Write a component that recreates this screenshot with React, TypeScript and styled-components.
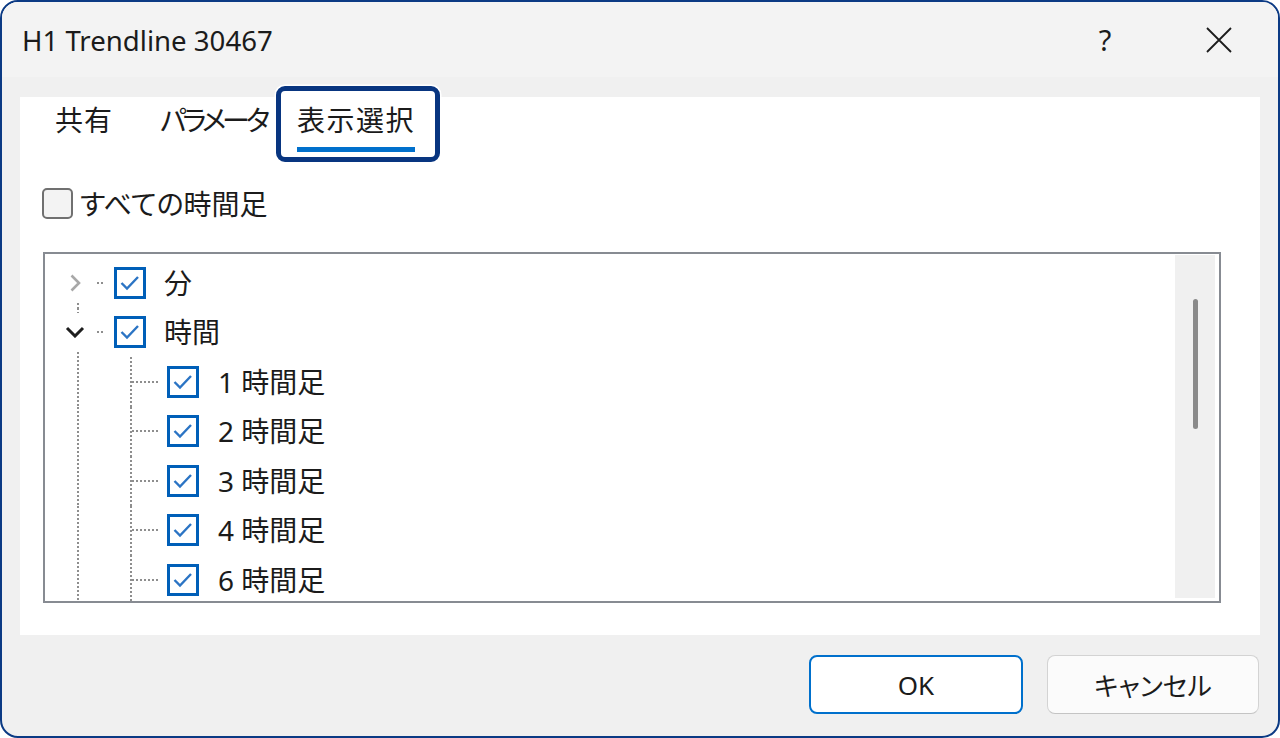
import React from "react";
import styled, { createGlobalStyle } from "styled-components";

const constants = {
    navy: "#0b3a84",
    ring: "#083580",
    accent: "#0070cc",
    checkBlue: "#005fb8",
    text: "#1b1b1b",
    dots: "#8e8e8e",
    titleBg: "#f3f3f3",
    bodyBg: "#f0f0f0",
    font: `"Noto Sans", "Noto Sans CJK JP", sans-serif`,
    rowHeight: "49.5px",
};

const GlobalStyle = createGlobalStyle`
	html, body {
		margin: 0;
		padding: 0;
		background: #ffffff;
	}
	* {
		box-sizing: border-box;
	}
`;

const Window = styled.div`
	width: 1280px;
	height: 738px;
	border: 2px solid ${constants.navy};
	border-radius: 18px;
	overflow: hidden;
	display: flex;
	flex-direction: column;
	background-color: ${constants.bodyBg};
	font-family: ${constants.font};
	color: ${constants.text};
`;

const TitleBar = styled.div`
	height: 75px;
	flex-shrink: 0;
	display: flex;
	align-items: center;
	padding-left: 20px;
	background-color: ${constants.titleBg};
`;

const Title = styled.span`
	flex: 1;
	font-size: 27.6px;
`;

const CaptionButton = styled.div<{ $width: number }>`
	width: ${(p) => p.$width}px;
	height: 75px;
	display: flex;
	align-items: center;
	justify-content: center;
	font-size: 29px;
`;

const Body = styled.div`
	padding: 20px 18px 0 18px;
`;

const Panel = styled.div`
	height: 538px;
	background-color: #ffffff;
	display: flex;
	flex-direction: column;
`;

const TabRow = styled.div`
	display: flex;
	margin-top: -6px;
	padding-left: 19px;
`;

const Tab = styled.div<{ $selected?: boolean; $width: number; $spacing: number }>`
	width: ${(p) => p.$width}px;
	height: 66px;
	padding: 11px 0 0 16px;
	display: flex;
	flex-direction: column;
	align-items: flex-start;
	background-color: ${(p) => (p.$selected ? "#ffffff" : "transparent")};
	border-radius: 4px;
	outline: ${(p) => (p.$selected ? `5px solid ${constants.ring}` : "none")};
	box-shadow: ${(p) => (p.$selected ? "0 0 0 6.5px #ffffff" : "none")};
	font-size: 28px;
	line-height: 36px;
	letter-spacing: ${(p) => p.$spacing}px;
	font-feature-settings: "palt";
	white-space: nowrap;
`;

const TabUnderline = styled.div<{ $visible?: boolean }>`
	align-self: stretch;
	height: 5px;
	margin: 9px 20px 0 0;
	background-color: ${(p) => (p.$visible ? constants.accent : "transparent")};
`;

const AllRow = styled.div`
	display: flex;
	align-items: center;
	margin-top: 31px;
	padding-left: 22px;
	height: 31px;
`;

const PlainBox = styled.div`
	width: 31px;
	height: 31px;
	border: 2.5px solid #707070;
	border-radius: 5px;
	background-color: #f3f3f3;
`;

const AllLabel = styled.span`
	margin-left: 7px;
	font-size: 28px;
	line-height: 1;
	font-feature-settings: "palt";
`;

const TreeBox = styled.div`
	height: 351px;
	margin: 33px 39px 0 23px;
	border: 2px solid #878b92;
	display: flex;
`;

const TreeList = styled.div`
	flex: 1;
	padding-top: 4px;
	overflow: hidden;
`;

const Row = styled.div`
	height: ${constants.rowHeight};
	display: flex;
	align-items: center;
`;

const verticalDots = `repeating-linear-gradient(to bottom, ${constants.dots} 0 2px, transparent 2px 4px)`;
const horizontalDots = `repeating-linear-gradient(to right, ${constants.dots} 0 2px, transparent 2px 4px)`;

const Guide = styled.div<{ $lower?: boolean }>`
	width: 52px;
	align-self: stretch;
	display: flex;
	align-items: center;
	padding-left: 18px;
	background-image: ${verticalDots};
	background-repeat: no-repeat;
	background-size: 2px ${(p) => (p.$lower ? "50%" : "100%")};
	background-position: 32px 100%;
`;

const Expander = styled.div`
	width: 24px;
	height: 38px;
	display: flex;
	align-items: center;
	justify-content: center;
	background-color: #ffffff;
`;

const Stub = styled.div`
	width: 7px;
	height: 2px;
	margin-right: 10px;
	background-image: ${horizontalDots};
`;

const Branch = styled.div`
	width: 61px;
	align-self: stretch;
	margin-right: 9px;
	background-image: ${verticalDots}, ${horizontalDots};
	background-repeat: no-repeat;
	background-size: 2px 100%, 26px 2px;
	background-position: 33px 0, 35px 50%;
`;

const CheckBox = styled.div`
	width: 32px;
	height: 32px;
	border: 3px solid ${constants.checkBlue};
	background-color: #ffffff;
	display: flex;
	align-items: center;
	justify-content: center;
`;

const NodeLabel = styled.span<{ $indent: number }>`
	margin-left: ${(p) => p.$indent}px;
	font-size: 28px;
	line-height: 1;
	white-space: pre;
`;

const ScrollTrack = styled.div`
	width: 40px;
	margin: 1px 4px 3px 0;
	padding-top: 44px;
	background-color: ${constants.bodyBg};
	display: flex;
	justify-content: center;
`;

const ScrollThumb = styled.div`
	width: 5px;
	height: 130px;
	border-radius: 3px;
	background-color: #8a8a8a;
`;

const Footer = styled.div`
	display: flex;
	justify-content: flex-end;
	gap: 24px;
	padding: 20px 19px 22px 0;
`;

const DialogButton = styled.div<{ $primary?: boolean }>`
	width: ${(p) => (p.$primary ? 214 : 212)}px;
	height: 59px;
	display: flex;
	align-items: center;
	justify-content: center;
	border-radius: 8px;
	font-size: 26px;
	background-color: ${(p) => (p.$primary ? "#ffffff" : "#fbfbfb")};
	border: ${(p) => (p.$primary ? `2px solid ${constants.accent}` : "1.5px solid #d3d3d3")};
	border-bottom-color: ${(p) => (p.$primary ? constants.accent : "#c4c4c4")};
	font-feature-settings: "palt";
`;

function CloseIcon() {
    return (
        <svg width="26" height="26" viewBox="0 0 26 26">
            <path d="M1 1 L25 25 M25 1 L1 25" stroke={constants.text} strokeWidth="1.8" fill="none" />
        </svg>
    );
}

function Chevron({ open }: { open: boolean }) {
    if (open) {
        return (
            <svg width="20" height="12" viewBox="0 0 20 12">
                <path d="M2 2 L10 10 L18 2" stroke="#1e1e1e" strokeWidth="3" fill="none" />
            </svg>
        );
    }
    return (
        <svg width="12" height="20" viewBox="0 0 12 20">
            <path d="M2.5 2.5 L10 10 L2.5 17.5" stroke="#a8a8a8" strokeWidth="2.6" fill="none" />
        </svg>
    );
}

function Check() {
    return (
        <svg width="26" height="26" viewBox="0 0 26 26">
            <path d="M4.5 13 L10 18.5 L21 7" stroke="#2b74c4" strokeWidth="2.4" fill="none" />
        </svg>
    );
}

interface TreeNode {
    label: string;
    open: boolean;
    children: string[];
}

const tree: TreeNode[] = [
    { label: "分", open: false, children: [] },
    {
        label: "時間",
        open: true,
        children: ["1 時間足", "2 時間足", "3 時間足", "4 時間足", "6 時間足"],
    },
];

function TreeRows() {
    const rows: React.ReactElement[] = [];
    tree.forEach((node, i) => {
        rows.push(
            <Row key={node.label}>
                <Guide $lower={i === 0}>
                    <Expander>
                        <Chevron open={node.open} />
                    </Expander>
                </Guide>
                <Stub />
                <CheckBox>
                    <Check />
                </CheckBox>
                <NodeLabel $indent={18}>{node.label}</NodeLabel>
            </Row>
        );
        if (node.open) {
            node.children.forEach((child) => {
                rows.push(
                    <Row key={child}>
                        <Guide />
                        <Branch />
                        <CheckBox>
                            <Check />
                        </CheckBox>
                        <NodeLabel $indent={19}>{child}</NodeLabel>
                    </Row>
                );
            });
        }
    });
    return <>{rows}</>;
}

const tabs = [
    { label: "共有", width: 105, spacing: 1 },
    { label: "パラメータ", width: 137, spacing: -4 },
    { label: "表示選択", width: 154, spacing: 1.5 },
];

export default function App() {
    return (
        <>
            <GlobalStyle />
            <Window>
                <TitleBar>
                    <Title>H1 Trendline 30467</Title>
                    <CaptionButton $width={110}>?</CaptionButton>
                    <CaptionButton $width={118}>
                        <CloseIcon />
                    </CaptionButton>
                </TitleBar>
                <Body>
                    <Panel>
                        <TabRow>
                            {tabs.map((t, i) => (
                                <Tab key={t.label} $selected={i === 2} $width={t.width} $spacing={t.spacing}>
                                    {t.label}
                                    <TabUnderline $visible={i === 2} />
                                </Tab>
                            ))}
                        </TabRow>
                        <AllRow>
                            <PlainBox />
                            <AllLabel>すべての時間足</AllLabel>
                        </AllRow>
                        <TreeBox>
                            <TreeList>
                                <TreeRows />
                            </TreeList>
                            <ScrollTrack>
                                <ScrollThumb />
                            </ScrollTrack>
                        </TreeBox>
                    </Panel>
                </Body>
                <Footer>
                    <DialogButton $primary>OK</DialogButton>
                    <DialogButton>キャンセル</DialogButton>
                </Footer>
            </Window>
        </>
    );
}
